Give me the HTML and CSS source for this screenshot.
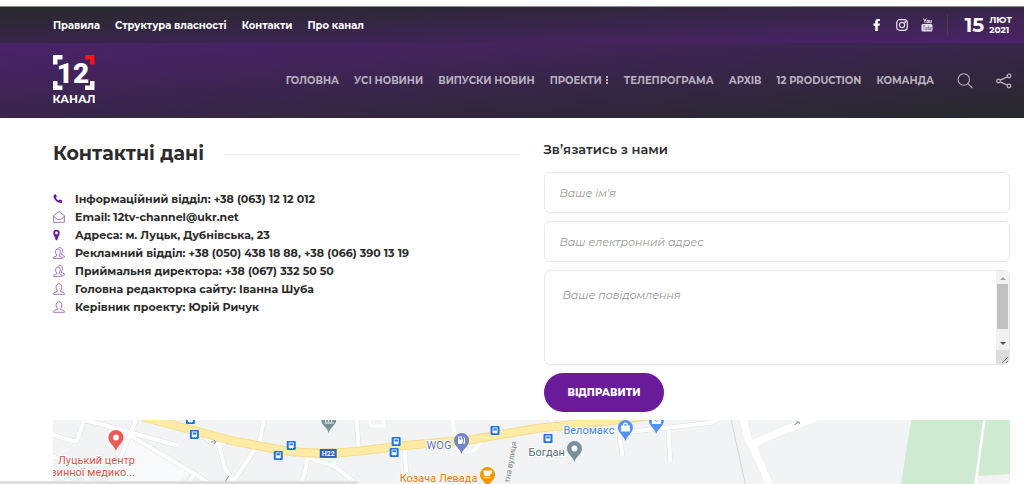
FILE: index.html
```html
<!DOCTYPE html>
<html lang="uk">
  <head>
    <meta charset="UTF-8" />
    <meta name="viewport" content="width=device-width, initial-scale=1.0" />
    <title>Контакти</title>
    <link rel="stylesheet" href="styles.css">
  </head>
  <body>
    <!-- top bar -->
    <div class="topbar">
      <nav class="topmenu">
        <a href="#">Правила</a>
        <a href="#">Структура власності</a>
        <a href="#">Контакти</a>
        <a href="#">Про канал</a>
      </nav>
      <div class="topright">
        <a href="#" class="social" aria-label="Facebook">
          <svg width="14" height="14" viewBox="0 0 14 14"><path fill="#fff" d="M5.2 13V7.7H3.400V5.500h1.800V3.800C5.200 2 6.200 1 8 1h1.900v2.100H8.800c-.8 0-1 .4-1 1v1.400h2.100l-.3 2.200H7.800V13z"/></svg>
        </a>
        <a href="#" class="social" aria-label="Instagram">
          <svg width="14" height="14" viewBox="0 0 14 14" fill="none" stroke="#e6e0ea" stroke-width="1.200"><rect x="1.700" y="1.700" width="10.600" height="10.600" rx="3"/><circle cx="7" cy="7" r="2.600"/><circle cx="10.200" cy="3.900" r=".4"/></svg>
        </a>
        <a href="#" class="social" aria-label="YouTube">
          <svg width="14" height="14" viewBox="0 0 14 14"><path d="M3.500.5l1.400 2.700v2M6.200.5L4.900 3.200M7 2.300h1.400v2.500H7zM9.700 2v2.800h1.500V2" fill="none" stroke="#e6e0ea" stroke-width="1"/><rect x="1.500" y="6" width="11" height="7.500" rx="1.500" fill="#e6e0ea"/><path d="M3 7.700h2.200M4.100 7.700v4.300M6 9v3h1V9M8.300 7.500V12h1V9.500h-1M11.700 11.900h-1.200V9.500h1.200v1.200" fill="none" stroke="#6b5080" stroke-width=".6"/></svg>
        </a>
        <div class="date">
          <span class="day">15</span>
          <span class="month">ЛЮТ<br>2021</span>
        </div>
      </div>
    </div>

    <!-- header -->
    <header class="header">
      <a href="#" class="logo" aria-label="12 Канал">
        <svg width="42" height="51" viewBox="0 0 42 51">
          <g fill="#fff">
            <path d="M0 0h9.500v4.500h-5v5H0z"/>
            <path d="M0 26h4.500v4.500h5V35H0z"/>
            <path d="M41.500 26H37v4.500h-5V35h9.500z"/>
          </g>
          <path fill="#ff1018" d="M32 0h9.500v9.500H37v-5h-5z"/>
          <text x="20" y="28" class="logo-num">12</text>
          <text x="21" y="48" class="logo-name">КАНАЛ</text>
        </svg>
      </a>
      <nav class="menu">
        <a href="#">ГОЛОВНА</a>
        <a href="#">УСІ НОВИНИ</a>
        <a href="#">ВИПУСКИ НОВИН</a>
        <a href="#" class="more">ПРОЕКТИ
          <svg width="4" height="10" viewBox="0 0 4 10" fill="currentColor"><path d="M1 0h2v2H1zM1 3h2v2H1zM1 6h2v2H1z"/></svg>
        </a>
        <a href="#">ТЕЛЕПРОГРАМА</a>
        <a href="#">АРХІВ</a>
        <a href="#">12 PRODUCTION</a>
        <a href="#">КОМАНДА</a>
        <button class="iconbtn" aria-label="Пошук">
          <svg width="16" height="16" viewBox="0 0 16 16" fill="none" stroke="currentColor" stroke-width="1.100"><circle cx="6.800" cy="6.500" r="5.700"/><path d="M10.900 10.700l4.400 4.300"/></svg>
        </button>
        <button class="iconbtn" aria-label="Поділитися">
          <svg width="16" height="16" viewBox="0 0 16 16" fill="none" stroke="currentColor" stroke-width="1.300"><circle cx="2.500" cy="8" r="1.800"/><circle cx="13" cy="3" r="1.800"/><circle cx="13" cy="13" r="1.800"/><path d="M4.200 7.200l7.100-3.400M4.200 8.800l7.100 3.400"/></svg>
        </button>
      </nav>
    </header>

    <!-- icons of the contact list -->
    <svg class="sprite" width="0" height="0">
      <symbol id="i-phone" viewBox="0 0 12 12"><path fill="currentColor" d="M.8 2.200L2.300 1.300c.3-.1.600 0 .7.300l.7 1.700c.1.300 0 .5-.2.700l-.7.600c.7 1.600 1.700 2.400 3.100 3l.7-.8c.2-.2.500-.3.700-.2l1.800.8c.3.100.4.400.3.700l-.5 1.500c-.1.200-.3.400-.5.400C4.300 10 .6 6.800.4 2.800c0-.2.200-.5.400-.6z"/></symbol>
      <symbol id="i-mail" viewBox="0 0 12 12"><path fill="none" stroke="currentColor" stroke-width=".6" d="M.6 4.600L6 .7l5.400 3.900v6.800H.6zM.6 5.500L4.500 8.600h3l3.900-3.100"/></symbol>
      <symbol id="i-pin" viewBox="0 0 12 12"><path fill="currentColor" fill-rule="evenodd" d="M3.500.8a3.200 3.200 0 0 1 3.200 3.200c0 2.400-2 4-2.400 7.200H2.700C2.300 8 .3 6.400.3 4A3.200 3.200 0 0 1 3.500.8zm0 1.800a1.400 1.400 0 1 0 0 2.800 1.400 1.400 0 0 0 0-2.800z"/></symbol>
      <symbol id="i-user" viewBox="0 0 12 12"><path fill="none" stroke="currentColor" stroke-width=".6" d="M.5 11.300h11c0-1.600-1-2-3.800-2.800V7.300C9 6 9 4.300 8.800 3 8.500 1.500 7.500.7 6 .7S3.500 1.500 3.200 3C3 4.300 3 6 4.300 7.300v1.200C1.500 9.300.5 9.700.5 11.300z"/></symbol>
      <symbol id="i-users" viewBox="0 0 12 12"><path fill="none" stroke="currentColor" stroke-width=".6" d="M.4 11.400h8.800c0-1.400-.8-1.800-3-2.500V7.700c1-1 1.100-2.400.9-3.700C6.900 2.800 6.100 2.100 4.900 2.100S2.900 2.800 2.700 4c-.2 1.300-.1 2.700.9 3.700v1.200c-2.200.7-3.200 1.100-3.200 2.500zM5.200 1.400C5.700.8 6.300.6 7 .6c1.300 0 2.200.8 2.400 2 .2 1.400.1 2.600-.9 3.600v1.300c2.200.6 3 1 3 2.500H9.800"/></symbol>
    </svg>

    <main class="content">
      <section class="contacts">
        <h1>Контактні дані</h1>
        <ul class="list">
          <li><svg class="icon"><use href="#i-phone"/></svg>Інформаційний відділ: +38 (063) 12 12 012</li>
          <li><svg class="icon"><use href="#i-mail"/></svg>Email: 12tv-channel@ukr.net</li>
          <li><svg class="icon"><use href="#i-pin"/></svg>Адреса: м. Луцьк, Дубнівська, 23</li>
          <li><svg class="icon"><use href="#i-users"/></svg>Рекламний відділ: +38 (050) 438 18 88, +38 (066) 390 13 19</li>
          <li><svg class="icon"><use href="#i-users"/></svg>Приймальня директора: +38 (067) 332 50 50</li>
          <li><svg class="icon"><use href="#i-user"/></svg>Головна редакторка сайту: Іванна Шуба</li>
          <li><svg class="icon"><use href="#i-user"/></svg>Керівник проекту: Юрій Ричук</li>
        </ul>
      </section>

      <form class="feedback">
        <h2>Зв’язатись з нами</h2>
        <input type="text" class="field" aria-label="Ваше ім'я" placeholder="Ваше ім'я">
        <input type="email" class="field" aria-label="Ваш електронний адрес" placeholder="Ваш електронний адрес">
        <div class="message-box">
          <textarea class="field message" aria-label="Ваше повідомлення" placeholder="Ваше повідомлення"></textarea>
          <!-- scroll track with arrows and the resize corner -->
          <div class="scroll">
            <svg width="6" height="3" viewBox="0 0 6 3"><path fill="#a3a3a3" d="M0 3l3-3 3 3z"/></svg>
            <div class="thumb"></div>
            <svg width="6" height="3" viewBox="0 0 6 3"><path fill="#505050" d="M0 0l3 3 3-3z"/></svg>
            <div class="corner">
              <svg width="8" height="8" viewBox="0 0 8 8"><path stroke="#777" d="M1 7l6-6M5 7l2-2"/></svg>
            </div>
          </div>
        </div>
        <button type="submit" class="send">ВІДПРАВИТИ</button>
      </form>
    </main>

    <!-- map -->
    <div class="map">
      <svg viewBox="0 0 958 64" preserveAspectRatio="xMinYMin slice">
        <defs>
          <g id="bus">
            <rect width="9" height="9" rx="1" fill="#1a73e8"/>
            <path fill="#fff" fill-rule="evenodd" d="M2 1.500h5v5.500H6v.8H5.200V7H3.800v.8H3V7H2zm.8.9v2h3.400v-2z"/>
          </g>
          <path id="marker" d="M0 11C-1.500 5-7.500 3.500-7.500-2.500a7.500 7.500 0 0 1 15 0C7.500 3.500 1.500 5 0 11z"/>
          <path id="streets" fill="none" stroke-linejoin="round" d="M0 15l20 6q4 1 5-3l6-18 20 5 75 21M83 0L60 56l-4 8M78 16l64 38 18 12M142 54l-8 10M0 36l22 10 16 18M0 52l20 12M211 0l-4 22-28 42M150 12q4 12 16 12 8 0 10-6M166 24l6 24 10 16M304 0l2 28M253 37l28 9 26 20M254 38q0 16-8 28M281 42v6M352 30l2 28M499 0l4 14M567 14l3 22M567 13l90-10q8-2 10-5M616 10l2 32"/>
        </defs>
        <rect width="958" height="64" fill="#f1f3f4"/>
        <path fill="#f8f9fa" d="M78 18l60 34-14 12H58z"/>
        <!-- parks -->
        <path fill="#ceead0" d="M859 0h72l-9 64h-73zM934 0h24v54l-33 2z"/>
        <path fill="none" stroke="#fff" stroke-width="2" d="M932 0l-8 64"/>
        <!-- streets -->
        <use href="#streets" stroke="#dfe2e5" stroke-width="5"/>
        <use href="#streets" stroke="#fff" stroke-width="4"/>
        <path fill="none" stroke="#fff" stroke-width="3" d="M317 0l1 6 13 0V0M400 0l2 18q0 14 12 14 11 0 15-14M460 24v12M32 0l35 9"/>
        <path fill="none" stroke="#fff" stroke-width="7" d="M691-2q3 20 9 28l18 40M698 25l34-15 41-16"/>
        <path fill="none" stroke="#d4d7da" stroke-width="1" d="M679 0l14 64"/>
        <!-- H22 -->
        <path fill="none" stroke="#f5dc8e" stroke-width="9" d="M90-3l90 24 37 7q30 6 60 5 20 0 70-7l70-6 70-12 60-6 100-12"/>
        <path fill="none" stroke="#ffeba3" stroke-width="7" d="M90-3l90 24 37 7q30 6 60 5 20 0 70-7l70-6 70-12 60-6 100-12"/>
        <rect x="267" y="29" width="17" height="9" fill="#2c66c3"/>
        <text x="275.500" y="36" class="road">H22</text>

        <use href="#bus" x="133" y="-5"/>
        <use href="#bus" x="137" y="10"/>
        <use href="#bus" x="234" y="21"/>
        <use href="#bus" x="221" y="31"/>
        <use href="#bus" x="339" y="17"/>
        <use href="#bus" x="337" y="28"/>
        <use href="#bus" x="438" y="6"/>
        <use href="#bus" x="491" y="14"/>

        <!-- places -->
        <use href="#marker" x="63" y="20" fill="#ea5b52"/>
        <circle cx="63" cy="17.500" r="3" fill="#fff"/>
        <text x="82" y="44" text-anchor="end" class="place red">Луцький центр</text>
        <text x="82" y="56" text-anchor="end" class="place red">зинної медико...</text>
        <use href="#marker" x="276" y="2" fill="#78909c"/>
        <path stroke="#fff" stroke-width="1" d="M272 3h9M273-2v4M276-2v4M279-2v4"/>
        <use href="#marker" x="409" y="23" fill="#7582cc"/>
        <path fill="#fff" d="M405.500 16.500h4v3h1v3h1v-4l-1-1.500h1l1 1.500v5h-2.500v-2h-.5v2.500h-4zM406.500 17.500v2h2v-2z" fill-rule="evenodd"/>
        <text x="374" y="29" class="place violet">WOG</text>
        <use href="#marker" x="435" y="57" fill="#f29900"/>
        <path fill="#fff" d="M431 50.500h8.500v3H438q0 2.500-2 2.500h-2.500q-2.500 0-2.500-2.500zM431 57h7v1h-7z"/>
        <text x="347" y="62" class="place orange">Козача Левада</text>
        <text transform="translate(457 63) rotate(-80)" class="street">тна вулиця</text>
        <use href="#marker" x="522" y="31" fill="#78909c"/>
        <circle cx="522" cy="28.500" r="3" fill="#fff"/>
        <text x="476" y="36" class="place grey">Богдан</text>
        <use href="#marker" x="573" y="10" fill="#5491f5"/>
        <path fill="#fff" fill-rule="evenodd" d="M568.500 5.500h2q0-3 2.500-3t2.500 3h2v6h-9zm3 0h3q0-1.500-1.500-1.500t-1.500 1.500z"/>
        <use href="#marker" x="604" y="3" fill="#5491f5"/>
        <path fill="#fff" d="M599.500-2h9v6h-9z"/>
        <path fill="none" stroke="#5491f5" d="M602 0q2 3 4 0"/>
        <text x="511" y="14" class="place blue">Веломакс</text>
        <path stroke="#8d99a5" fill="none" d="M158 22h5l-2-2M163 22l-2 2M172 62l4-6M742 5l5-3M744 2h3v2"/>
      </svg>
    </div>
    <div class="status"></div>
  </body>
</html>
```
FILE: styles.css
```css
* {
  box-sizing: border-box;
}

body {
  margin: 0;
  padding-top: 6px;
  height: 100vh;
  overflow: hidden;
  display: flex;
  flex-direction: column;
  font-family: Montserrat, Inter, "Open Sans", sans-serif;
  color: #2b2b2b;
  background-color: #fff;
}

a {
  color: inherit;
  text-decoration: none;
}

/* top bar */
.topbar {
  flex: none;
  height: 37px;
  padding: 0 12px 0 53px;
  display: flex;
  align-items: center;
  justify-content: space-between;
  border-top: 1px solid #8b8b91;
  background: linear-gradient(to bottom right, #26292b, #4b2269);
  color: #fff;
}

.topmenu {
  display: flex;
  gap: 15px;
  font-size: 10px;
  font-weight: 700;
}

.topright {
  display: flex;
  align-items: center;
  gap: 11px;
}

.social {
  display: flex;
}

.date {
  display: flex;
  align-items: center;
  gap: 5px;
  height: 22px;
  margin-left: 2px;
  padding-left: 16px;
  border-left: 1px solid #4a3b50;
}

.day {
  font-size: 20px;
  font-weight: 700;
}

.month {
  font-size: 9px;
  line-height: 10px;
  font-weight: 700;
}

/* header */
.header {
  flex: none;
  height: 75px;
  padding: 0 12px 0 53px;
  display: flex;
  align-items: center;
  justify-content: space-between;
  background: linear-gradient(to bottom right, #4c226b, #26292b);
}

.logo {
  display: flex;
}

.logo-num {
  fill: #fff;
  font-family: Roboto, sans-serif;
  font-size: 28px;
  font-weight: 900;
  text-anchor: middle;
}

.logo-name {
  fill: #fff;
  font-size: 11px;
  font-weight: 700;
  text-anchor: middle;
}

.menu {
  display: flex;
  align-items: center;
  gap: 15px;
  font-size: 10px;
  font-weight: 700;
  color: #b9b0c0;
  white-space: nowrap;
}

.more {
  display: flex;
  align-items: center;
  gap: 3px;
}

.iconbtn {
  display: flex;
  margin-left: 8px;
  padding: 0;
  border: none;
  background: none;
  color: inherit;
}

/* contacts and form */
.content {
  flex: none;
  display: grid;
  grid-template-columns: 1fr 1fr;
  gap: 24px;
  padding: 22px 14px 8px 53px;
}

h1 {
  display: flex;
  align-items: center;
  gap: 20px;
  margin: 0;
  font-size: 19px;
  line-height: 28px;
  font-weight: 700;
  white-space: nowrap;
}

h1::after {
  content: "";
  flex: 1;
  height: 1px;
  background-color: #eee;
}

.list {
  list-style: none;
  margin: 22px 0 0;
  padding: 0;
  font-size: 11px;
  line-height: 18px;
  font-weight: 700;
}

.list li {
  display: flex;
  align-items: center;
  gap: 10px;
}

.icon {
  width: 12px;
  height: 12px;
  color: #6a1b9a;
}

.sprite {
  position: absolute;
}

.feedback {
  display: flex;
  flex-direction: column;
  align-items: flex-start;
  gap: 8px;
}

h2 {
  margin: 0 0 6px;
  font-size: 13px;
  line-height: 18px;
  font-weight: 600;
}

.field {
  display: block;
  width: 100%;
  height: 41px;
  padding: 0 15px;
  border: 1px solid #e8e8e8;
  border-radius: 6px;
  font-family: inherit;
  font-size: 11px;
  line-height: 18px;
  outline: none;
}

.field::placeholder {
  color: #999;
  font-style: italic;
  font-weight: 400;
}

.message-box {
  position: relative;
  width: 100%;
}

.message {
  height: 95px;
  padding: 15px 18px;
  resize: none;
}

.scroll {
  position: absolute;
  top: 1px;
  right: 1px;
  bottom: 1px;
  width: 13px;
  display: flex;
  flex-direction: column;
  align-items: center;
  padding-top: 6px;
  border-radius: 0 5px 5px 0;
  background-color: #f1f1f1;
  overflow: hidden;
  pointer-events: none;
}

.thumb {
  width: 11px;
  height: 45px;
  margin: 4px 0 13px;
  background-color: #c1c1c1;
}

.corner {
  display: flex;
  align-items: flex-end;
  justify-content: flex-end;
  width: 100%;
  height: 14px;
  margin-top: auto;
  background-color: #dcdcdc;
}

.send {
  height: 39px;
  padding: 0 24px;
  border: none;
  border-radius: 20px;
  background-color: #6a1b9a;
  color: #fff;
  font-family: inherit;
  font-size: 10px;
  font-weight: 800;
}

/* map */
.map {
  flex: 1;
  min-height: 64px;
  margin: 0 14px 0 53px;
  overflow: hidden;
  background-color: #f1f3f4;
}

.map svg {
  display: block;
  width: 100%;
}

.place {
  font-family: Roboto, sans-serif;
  font-size: 11px;
  stroke: #fff;
  stroke-width: 2px;
  paint-order: stroke;
}

.road {
  font-family: Roboto, sans-serif;
  font-size: 7px;
  font-weight: 700;
  fill: #fff;
  text-anchor: middle;
}

.street {
  font-family: Roboto, sans-serif;
  font-size: 8px;
  fill: #80868b;
}

.red {
  fill: #d9534a;
}

.violet {
  fill: #6470bd;
}

.orange {
  fill: #e37400;
}

.grey {
  fill: #546e7a;
}

.blue {
  fill: #4285f4;
}

.status {
  position: absolute;
  left: 0;
  bottom: 0;
  width: 35%;
  height: 3px;
  border-top-right-radius: 4px;
  background-color: #dcdde1;
}
```
